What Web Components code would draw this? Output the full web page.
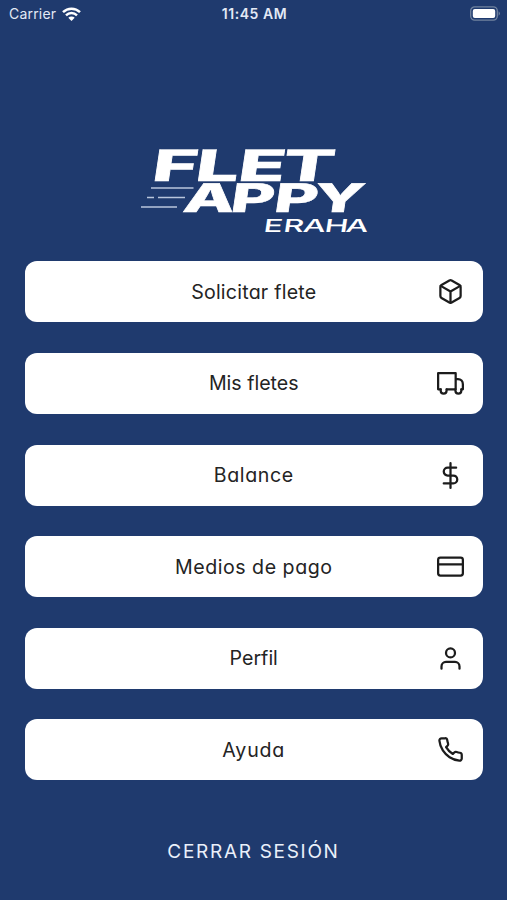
<!DOCTYPE html>
<html lang="es">
<head>
<meta charset="utf-8">
<title>Flet Appy</title>
<style>
html,body{margin:0;height:100%;background:#1f3a6e}
</style>
</head>
<body>
<flet-home></flet-home>
<script>
class StatusBar extends HTMLElement {
  connectedCallback() {
    this.attachShadow({mode: 'open'}).innerHTML = `
    <style>
      :host{display:grid;grid-template-columns:1fr auto 1fr;align-items:center;height:27px;padding:0 7px 0 9px;box-sizing:border-box;color:#e3e9f5;font:400 14px Inter,sans-serif}
      .left{display:flex;align-items:center;gap:6px}
      .carrier{letter-spacing:.2px}
      .time{font-weight:600;font-size:14px;letter-spacing:.55px}
      .right{display:flex;justify-content:flex-end}
      svg{display:block}
    </style>
    <div class="left"><span class="carrier">Carrier</span>
      <svg width="19" height="14" viewBox="0 0 19 14" fill="none" stroke="#fff" stroke-width="2.5"><path d="M1 5.1a12.2 12.2 0 0 1 17 0M4 8.3a8 8 0 0 1 11 0"/><path d="M9.5 14 6.3 10.8a4.6 4.6 0 0 1 6.4 0z" fill="#fff" stroke="none"/></svg></div>
    <span class="time">11:45 AM</span>
    <div class="right"><svg width="30" height="15" viewBox="0 0 30 15"><rect x=".7" y=".9" width="26.6" height="13.2" rx="4" fill="none" stroke="#71839f" stroke-width="1.3"/><rect x="2.8" y="3" width="22.4" height="9" rx="2" fill="#fff"/><path d="M28.6 5.2q2.6 2.2 0 4.6z" fill="#71839f"/></svg></div>`;
  }
}
customElements.define('status-bar', StatusBar);

class FletLogo extends HTMLElement {
  connectedCallback() {
    this.attachShadow({mode: 'open'}).innerHTML = `
    <style>
      :host{display:block;height:100px}
      svg{display:block;margin-left:130px;overflow:visible}
      text{font-family:Inter,sans-serif;fill:#fff}
      .bold{stroke:#fff;stroke-width:.5}
    </style>
    <svg width="250" height="100" viewBox="130 140 250 100">
      <text class="bold" transform="translate(154 180.8) skewX(-8.5) scale(1.77 1)" font-size="43.5" font-weight="800" x="-1.9 22.6 46.8 71.6">FLET</text>
      <text class="bold" transform="translate(183 211.8) skewX(-8.5) scale(1.7 1)" font-size="39.5" font-weight="800" x="-.7 27.2 52.8 76">APPY</text>
      <text transform="translate(265 231.5) skewX(-8.5) scale(1.78 1)" font-size="18" font-weight="450" x="-1.3 9.8 21 33 45">ERAHA</text>
      <g stroke="#b9c5dc" stroke-width="1.3"><path d="M151 188h42.5M147 197.5h7M158 197.5h27M141 207h36"/></g>
    </svg>`;
  }
}
customElements.define('flet-logo', FletLogo);

const ICONS = {
  box: '<path d="M21 16V8a2 2 0 0 0-1-1.73l-7-4a2 2 0 0 0-2 0l-7 4A2 2 0 0 0 3 8v8a2 2 0 0 0 1 1.73l7 4a2 2 0 0 0 2 0l7-4A2 2 0 0 0 21 16z"/><path d="M3.3 7 12 12l8.7-5M12 22V12"/>',
  truck: '<path d="M3.3 17.2H1V2.8h15.6v14.4H8.7M16.6 8h2c2.7 0 4.4 2 4.4 4.6v4.6h-1.2"/><path d="M3.3 17.2v1.3a2.5 2.5 0 0 0 5.2 0v-1.3M16.4 17.2v1.3a2.5 2.5 0 0 0 5.2 0v-1.3"/>',
  dollar: '<path d="M12 1v22M17 5H9.5a3.5 3.5 0 0 0 0 7h5a3.5 3.5 0 0 1 0 7H6"/>',
  card: '<rect x="1" y="4" width="22" height="16" rx="2"/><path d="M1 10h22"/>',
  user: '<path d="M20 21v-2a4 4 0 0 0-4-4H8a4 4 0 0 0-4 4v2"/><circle cx="12" cy="7" r="4"/>',
  phone: '<path d="M22 16.92v3a2 2 0 0 1-2.18 2 19.79 19.79 0 0 1-8.63-3.07 19.5 19.5 0 0 1-6-6 19.79 19.79 0 0 1-3.07-8.67A2 2 0 0 1 4.11 2h3a2 2 0 0 1 2 1.72c.13.96.36 1.9.7 2.81a2 2 0 0 1-.45 2.11L8.09 9.91a16 16 0 0 0 6 6l1.27-1.27a2 2 0 0 1 2.11-.45c.91.34 1.85.57 2.81.7A2 2 0 0 1 22 16.92z"/>'
};

class MenuButton extends HTMLElement {
  connectedCallback() {
    this.attachShadow({mode: 'open'}).innerHTML = `
    <style>
      :host{display:grid;grid-template-columns:28px 1fr 28px;align-items:center;height:61px;padding:0 18px;box-sizing:border-box;background:#fff;border-radius:12px;color:#242424;font:400 19.6px Inter,sans-serif;font-feature-settings:"cv11"}
      .label{grid-column:2;text-align:center;white-space:nowrap}
      svg{display:block;width:27px;height:27px;overflow:visible;fill:none;stroke:#1c1c1c;stroke-width:2;stroke-linejoin:round;stroke-linecap:round}
    </style>
    <span class="label"><slot></slot></span>
    <svg viewBox="0 0 24 24">${ICONS[this.getAttribute('icon')]}</svg>`;
  }
}
customElements.define('menu-button', MenuButton);

class FletHome extends HTMLElement {
  connectedCallback() {
    this.attachShadow({mode: 'open'}).innerHTML = `
    <style>
      :host{display:flex;flex-direction:column;height:900px;background:#1f3a6e;overflow:hidden}
      flet-logo{margin-top:113px}
      nav{display:grid;gap:30.6px;padding:21.4px 24.5px 0 25px}
      .logout{margin-top:58px;text-align:center;color:#eaf0fa;font:400 19px/28px Inter,sans-serif;letter-spacing:1.7px}
    </style>
    <status-bar></status-bar>
    <flet-logo></flet-logo>
    <nav>
      <menu-button icon="box" style="letter-spacing:.22px">Solicitar flete</menu-button>
      <menu-button icon="truck">Mis fletes</menu-button>
      <menu-button icon="dollar" style="letter-spacing:.6px">Balance</menu-button>
      <menu-button icon="card" style="letter-spacing:.52px">Medios de pago</menu-button>
      <menu-button icon="user">Perfil</menu-button>
      <menu-button icon="phone" style="letter-spacing:.8px">Ayuda</menu-button>
    </nav>
    <div class="logout">CERRAR SESIÓN</div>`;
  }
}
customElements.define('flet-home', FletHome);
</script>
</body>
</html>
